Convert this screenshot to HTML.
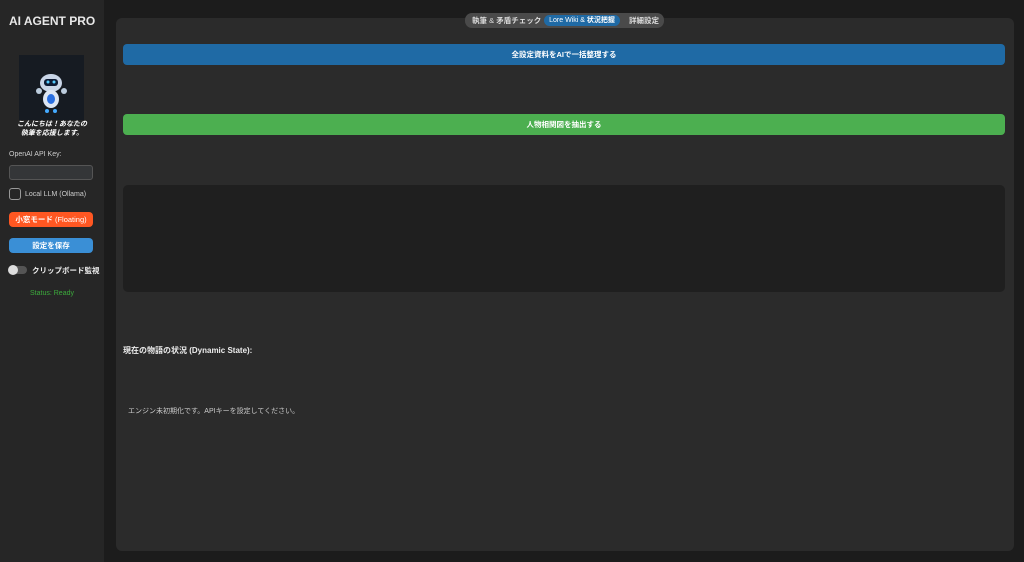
<!DOCTYPE html>
<html><head><meta charset="utf-8"><style>
*{margin:0;padding:0;box-sizing:border-box}
body{width:1024px;height:562px;background:#1c1c1c;font-family:"Liberation Sans","Noto Sans CJK JP",sans-serif;color:#ddd;position:relative;overflow:hidden}
.sb{position:absolute;left:0;top:0;width:104px;height:562px;background:#262626}
.abs{position:absolute}
.btn{position:absolute;border-radius:4px;color:#fff;font-size:7.5px;font-weight:bold;display:flex;align-items:center;justify-content:center}
</style></head><body>
<div class="sb">
<div class="abs" style="left:9px;top:14px;font-size:12px;font-weight:bold;color:#e8e8e8">AI AGENT PRO</div>
<div class="abs" style="left:19px;top:55px;width:65px;height:65px;background:#161b22">
<svg width="65" height="65"><ellipse cx="32" cy="28" rx="11" ry="9" fill="#c9d6e8"/><rect x="25" y="24" width="14" height="7" rx="3" fill="#0c1a33"/><circle cx="29" cy="27" r="1.5" fill="#5cf"/><circle cx="35" cy="27" r="1.5" fill="#5cf"/><ellipse cx="32" cy="44" rx="8" ry="9" fill="#dde6f3"/><ellipse cx="32" cy="44" rx="4" ry="5" fill="#2a6fe0"/><circle cx="20" cy="36" r="3" fill="#bcd"/><circle cx="45" cy="36" r="3" fill="#bcd"/><circle cx="28" cy="56" r="2" fill="#4af"/><circle cx="36" cy="56" r="2" fill="#4af"/></svg></div>
<div class="abs" style="left:8px;top:121px;width:88px;text-align:center;font-size:7px;font-weight:bold;font-style:italic;color:#fff;line-height:8.5px">こんにちは！あなたの<br>執筆を応援します。</div>
<div class="abs" style="left:9px;top:151px;font-size:7px;color:#ccc">OpenAI API Key:</div>
<div class="abs" style="left:9px;top:165px;width:84px;height:15px;border:1px solid #555;border-radius:3px;background:#343638"></div>
<div class="abs" style="left:9px;top:188px;width:12px;height:12px;border:1.5px solid #999;border-radius:3px"></div>
<div class="abs" style="left:25px;top:190.5px;font-size:7px;color:#ccc">Local LLM (Ollama)</div>
<div class="btn" style="left:9px;top:212px;width:84px;height:15px;background:#ff5722">小窓モード <span style="font-weight:normal">&nbsp;(Floating)</span></div>
<div class="btn" style="left:9px;top:238px;width:84px;height:15px;background:#3a8fd6">設定を保存</div>
<div class="abs" style="left:9px;top:266px;width:18px;height:8px;border-radius:4px;background:#555"></div>
<div class="abs" style="left:8px;top:265px;width:10px;height:10px;border-radius:5px;background:#ddd"></div>
<div class="abs" style="left:32px;top:264.5px;font-size:7.5px;font-weight:bold;color:#eee">クリップボード監視</div>
<div class="abs" style="left:0;top:290px;width:104px;text-align:center;font-size:7px;color:#3cab3c">Status: Ready</div>
</div>
<div class="abs" style="left:116px;top:18px;width:898px;height:533px;background:#2b2b2b;border-radius:6px"></div>
<div class="abs" style="left:465px;top:13px;width:199px;height:15px;background:#4a4a4a;border-radius:7px"></div>
<div class="abs" style="left:472px;top:15px;font-size:7.5px;font-weight:bold;color:#ddd;line-height:11px">執筆 <span style="font-weight:normal">&amp;</span> 矛盾チェック</div>
<div class="abs" style="left:544px;top:15px;width:76px;height:11px;background:#1f6aa5;border-radius:6px;font-size:7px;color:#fff;text-align:center;line-height:11px">Lore Wiki &amp; <b>状況把握</b></div>
<div class="abs" style="left:629px;top:15px;font-size:7.5px;font-weight:bold;color:#ddd;line-height:11px">詳細設定</div>
<div class="btn" style="left:123px;top:44px;width:882px;height:21px;background:#1f6aa5">全設定資料をAIで一括整理する</div>
<div class="btn" style="left:123px;top:114px;width:882px;height:21px;background:#4caf50">人物相関図を抽出する</div>
<div class="abs" style="left:123px;top:185px;width:882px;height:107px;background:#1f1f1f;border-radius:5px"></div>
<div class="abs" style="left:123px;top:345px;font-size:8px;font-weight:bold;color:#eee">現在の物語の状況 (Dynamic State):</div>
<div class="abs" style="left:128px;top:406px;font-size:7px;color:#ccc">エンジン未初期化です。APIキーを設定してください。</div>
</body></html>
